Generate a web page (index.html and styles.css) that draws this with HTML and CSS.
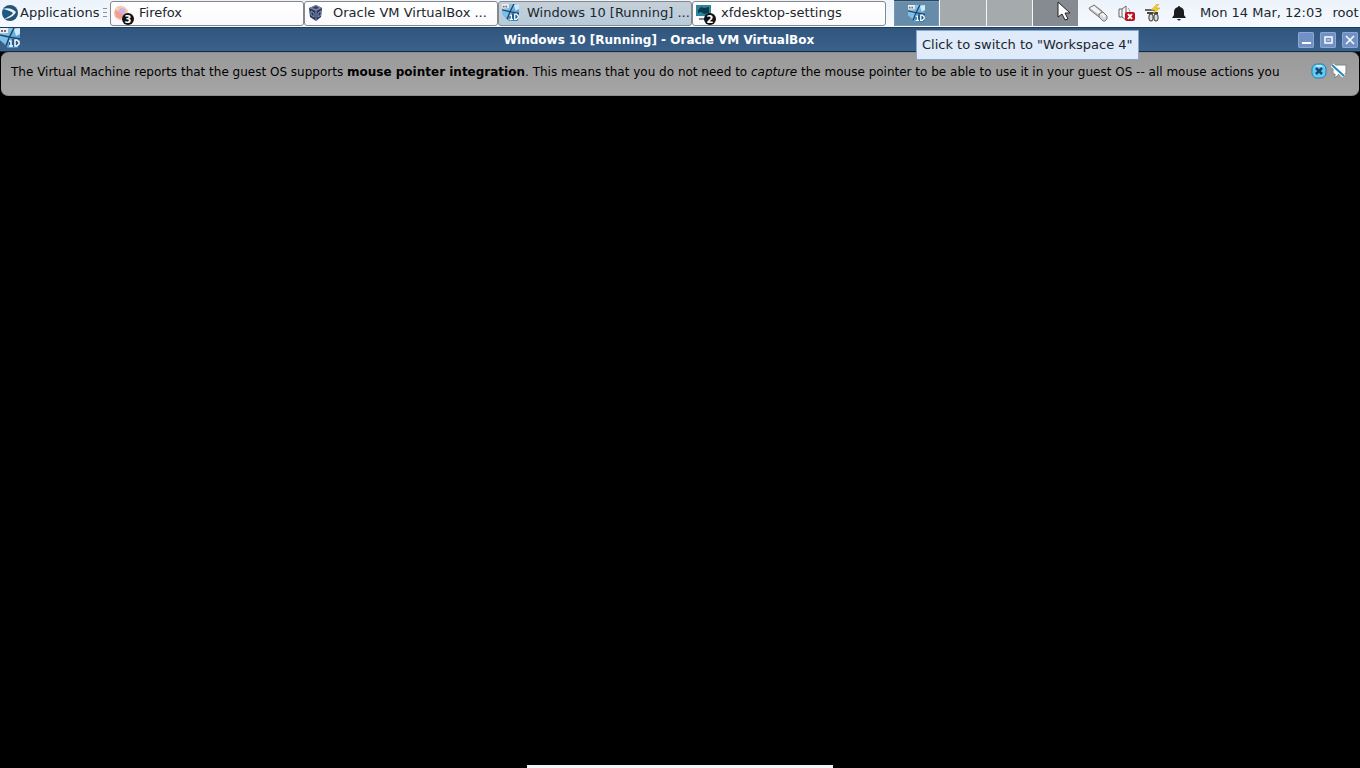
FILE: index.html
```
<!DOCTYPE html>
<html lang="en">
<head>
<meta charset="utf-8">
<title>Windows 10 [Running] - Oracle VM VirtualBox</title>
<link rel="stylesheet" href="styles.css">
</head>
<body>
<svg class="defs" aria-hidden="true">
  <linearGradient id="glass" x1="0" y1="0" x2="1" y2="1"><stop offset="0" stop-color="#a9d8f2"/><stop offset="1" stop-color="#2f86c4"/></linearGradient>
  <symbol id="win10" viewBox="0 0 20 20">
    <path fill="url(#glass)" d="M0 0h20v13l-2 7H8L0 12z"/>
    <path fill="#cfe9f8" d="M14 1l6-1v6l-4 2z"/>
    <path fill="#7cc0ea" d="M0 8l9 1-2 7-7-4z"/>
    <path stroke="#1d456b" stroke-width="1.5" fill="none" d="M0 7l9 2 11 2M14 0L9 10 6 18"/>
    <path fill="#eceff2" d="M0 0h8v5H0z"/>
    <path stroke="#8a6670" stroke-width="2" stroke-dasharray="2 1" d="M1 3h6"/>
    <path stroke="#245d8e" stroke-width="4" fill="none" d="M11 12v6M14 13h3v4h-3z"/>
    <path stroke="#fff" stroke-width="1.5" fill="none" d="M9 13h2v5M9 18h4M15 12h2l2 2v2l-2 2h-2z"/>
  </symbol>
</svg>
<header class="panel">
  <button class="apps">
    <svg width="18" height="18" viewBox="0 0 18 18"><circle cx="10" cy="9" r="8" fill="#235377"/><path d="M3 5c5-2 10 0 13 3-2 4-7 7-12 7 4-2 8-4 9-6-2-2-6-3-10-4z" fill="#e8f1f6"/><path d="M3 6c3 0 6 1 8 3-1 2-4 4-7 5z" fill="#1d5a83"/></svg>
    <span>Applications</span>
    <span class="grip"></span>
  </button>
  <nav class="tasks">
    <button class="task"><svg width="22" height="24" viewBox="0 0 22 24"><circle cx="8" cy="12" r="7" fill="#f3b9a9"/><path d="M2 8l2-3 2 2 3-2 6 4v5l-4 5-7-2z" fill="#f9d3b0"/><circle cx="9" cy="11" r="4" fill="#d3b3e0"/><path d="M2 9c3 0 3 3 6 3l3 2-3 4-5-2z" fill="#f59c92"/><circle cx="15" cy="18" r="6" fill="#111"/><text x="15" y="22" class="badge">3</text></svg><span>Firefox</span></button>
    <button class="task"><svg width="22" height="24" viewBox="0 0 22 24"><path d="M2 7l7-3 6 3-1 9-5 4-6-4z" fill="#2b375a"/><path d="M2 7l7-3 6 3-6 3z" fill="#7f8aa8"/><path d="M5 7l4-2 3 2-3 1z" fill="#303d65"/><path d="M9 10v10M4 10l3 2v4l-3-2zM11 12l3-2v4l-3 2z" fill="none" stroke="#8492b8"/></svg><span>Oracle VM VirtualBox ...</span></button>
    <button class="task active"><svg width="22" height="24" viewBox="0 0 22 24"><use href="#win10" x="1" y="3" width="17" height="17"/></svg><span>Windows 10 [Running] ...</span></button>
    <button class="task"><svg width="22" height="24" viewBox="0 0 22 24"><path fill="#2a87a0" d="M1 4h15v11H1z"/><path fill="#103847" d="M3 9l3-3 3 1 5-1v6l-5 1-3-2-3 1z"/><path fill="#7b8b93" d="M4 17h8v2H4z"/><circle cx="15" cy="18" r="6" fill="#111"/><text x="15" y="22" class="badge">2</text></svg><span>xfdesktop-settings</span></button>
  </nav>
  <div class="pager">
    <button class="space current" aria-label="Workspace 1"><svg width="17" height="17"><use href="#win10" width="17" height="17"/></svg></button>
    <button class="space" aria-label="Workspace 2"></button>
    <button class="space" aria-label="Workspace 3"></button>
    <button class="space hover" aria-label="Workspace 4"></button>
    <svg class="cursor" width="14" height="20" viewBox="0 0 14 20"><path d="M1 1v15l4-3 3 6 3-1-3-6h5z" fill="#fff" stroke="#222"/></svg>
    <div class="tooltip" role="tooltip">Click to switch to "Workspace 4"</div>
  </div>
  <div class="tray">
    <svg width="20" height="20" viewBox="0 0 20 20"><path d="M1 5l5-3 8 6v5l-3 1-9-7z" fill="#bdbdbd" stroke="#777"/><path d="M2 5l4-2 7 6-3 2z" fill="#f3f3f3"/><path d="M11 11l4-2 4 4v3l-2 2h-2l-4-4z" fill="#d5d5d5" stroke="#777"/><path d="M12 11l3-1 3 3-2 2z" fill="#f0f0f0"/></svg>
    <svg width="18" height="18" viewBox="0 0 18 18"><path d="M2 5h3v8H2zM5 5l4-3v14l-4-3" fill="#f5f5f5" stroke="#666"/><path d="M11 4q2 2 2 4" fill="none" stroke="#999"/><rect x="8" y="8" width="10" height="9" rx="2" fill="#bd1021"/><path d="M11 10l4 5M15 10l-4 5" stroke="#fff" stroke-width="2"/></svg>
    <svg width="18" height="18" viewBox="0 0 18 18"><path d="M1 6h10" stroke="#666" stroke-width="2"/><path d="M3 9h11" stroke="#444" stroke-width="2"/><rect x="5" y="10" width="4" height="7" rx="2" fill="#ddd" stroke="#333"/><rect x="10" y="10" width="4" height="7" rx="2" fill="#ddd" stroke="#333"/><path d="M13 0L7 6h4l-2 4 7-6h-4l3-4z" fill="#f5cc2e" stroke="#c99b26" stroke-width=".5"/></svg>
    <svg width="16" height="18" viewBox="0 0 16 18"><path d="M8 2q1 0 1 1 4 1 4 5v3l2 3H1l2-3V8q0-4 4-5 0-1 1-1zM6 15h4q-2 3-4 0z" fill="#1b1c1e"/></svg>
  </div>
  <button class="clock">Mon 14 Mar, 12:03</button>
  <button class="user">root</button>
</header>
<main class="window">
  <div class="titlebar">
    <svg class="title-icon" width="20" height="20"><use href="#win10" width="20" height="20"/></svg>
    <h1>Windows 10 [Running] - Oracle VM VirtualBox</h1>
    <div class="controls">
      <button aria-label="Minimize"><svg width="16" height="16"><path d="M4 11h9" stroke="#fff" stroke-width="2"/></svg></button>
      <button aria-label="Maximize"><svg width="16" height="16"><path d="M5 5h7v6H5z" fill="none" stroke="#fff" stroke-width="1.5"/><path d="M7 7h3v2H7z" fill="#a9bde2"/></svg></button>
      <button aria-label="Close"><svg width="16" height="16"><path d="M4 4l8 8M12 4l-8 8" stroke="#fff" stroke-width="1.5"/></svg></button>
    </div>
  </div>
  <section class="message">
    <p>The Virtual Machine reports that the guest OS supports <b>mouse pointer integration</b>. This means that you do not need to <i>capture</i> the mouse pointer to be able to use it in your guest OS -- all mouse actions you</p>
    <div class="message-actions">
      <button aria-label="Close message"><svg width="16" height="16" viewBox="0 0 16 16"><rect x="1" y="1" width="14" height="14" rx="5" fill="#66caf5" stroke="#237fae"/><path d="M5 3h6" stroke="#b5ebff" stroke-width="2"/><path d="M5 5l6 6M11 5l-6 6" stroke="#124a70" stroke-width="2.5"/></svg></button>
      <button aria-label="Do not show again"><svg width="16" height="16" viewBox="0 0 16 16"><path d="M2 2h13v9H8l-4 4v-4H2z" fill="#fff" stroke="#7d8589"/><path d="M1 2l12 11" stroke="#fff" stroke-width="4"/><path d="M1 2l12 11" stroke="#2588b8" stroke-width="2"/></svg></button>
    </div>
  </section>
  <div class="screen"></div>
  <div class="mini-toolbar"></div>
</main>
</body>
</html>
```
FILE: styles.css
```
* { box-sizing: border-box; }
body {
  margin: 0;
  min-height: 100vh;
  display: flex;
  flex-direction: column;
  overflow: hidden;
  background: #000;
  color: #20262b;
  font: 13px/20px "DejaVu Sans", sans-serif;
}
button {
  padding: 0;
  border: 0;
  background: none;
  color: inherit;
  font: inherit;
  white-space: nowrap;
}
svg { display: block; flex: none; }
.defs { position: absolute; width: 0; height: 0; }
.panel {
  display: flex;
  align-items: center;
  height: 27px;
  padding-bottom: 1px;
  background: linear-gradient(#edf3fa, #f5faff);
}
.apps {
  display: flex;
  align-items: center;
  gap: 2px;
  width: 110px;
  flex: none;
}
.grip {
  width: 4px;
  height: 10px;
  margin-left: 2px;
  background: repeating-linear-gradient(#8b9094 0 1px, transparent 1px 4px);
}
.tasks { display: flex; flex: 0 0 776px; min-width: 0; }
.task {
  display: flex;
  align-items: center;
  flex: 1;
  gap: 4px;
  height: 25px;
  min-width: 0;
  padding-left: 2px;
  border: 1px solid #85878b;
  border-radius: 3px;
  background: linear-gradient(#fff, #fafafc);
}
.task.active { background: linear-gradient(#c5d0d9, #b6cbda); }
.badge {
  fill: #fff;
  font-size: 10px;
  font-weight: bold;
  text-anchor: middle;
}
.pager {
  position: relative;
  display: flex;
  gap: 1px;
  width: 184px;
  height: 26px;
  margin-left: 8px;
  flex: none;
}
.space { flex: 1; background: #a5aaad; }
.space.hover { background: #858b91; }
.space.current {
  display: grid;
  place-items: center;
  border-top: 1px solid #274566;
  background: #668caa;
  box-shadow: inset 0 0 0 1px #7896ae;
}
.cursor { position: absolute; left: 163px; top: 1px; }
.tooltip {
  position: absolute;
  z-index: 2;
  left: 22px;
  top: 30px;
  padding: 4px 5px;
  border: 1px solid #8ba6c8;
  background: #dfeafa;
  white-space: nowrap;
}
.tray {
  display: flex;
  align-items: center;
  gap: 9px;
  margin-left: 10px;
}
.clock { margin-left: 13px; }
.user { margin-left: 10px; }
.window { flex: 1; display: flex; flex-direction: column; }
.titlebar {
  display: flex;
  align-items: center;
  height: 25px;
  border-top: 1px solid #203c5d;
  border-bottom: 1px solid #172b43;
  background: linear-gradient(#31567e, #3b628c);
  color: #fff;
}
.title-icon { align-self: flex-start; }
.titlebar h1 { flex: 1; margin: 0; font-size: 12px; line-height: 20px; text-align: center; }
.controls { display: flex; gap: 6px; padding-right: 2px; }
.controls button {
  border-radius: 2px;
  background: #7191c4;
  box-shadow: inset 0 0 0 1px #8aa7d5;
}
.message {
  display: flex;
  align-items: flex-start;
  justify-content: space-between;
  height: 44px;
  margin: 0 1px;
  padding: 10px 12px 0 10px;
  border: 1px solid #8d8d8d;
  border-width: 1px 0;
  border-radius: 7px;
  background: linear-gradient(#9a9a9a, #a5a5a5);
  color: #000;
}
.message p { margin: 0; font-size: 12px; line-height: 18px; white-space: nowrap; }
.message-actions { display: flex; gap: 4px; }
.screen { flex: 1; }
.mini-toolbar {
  width: 306px;
  height: 3px;
  align-self: center;
  background: #f5f2f7;
}
```
